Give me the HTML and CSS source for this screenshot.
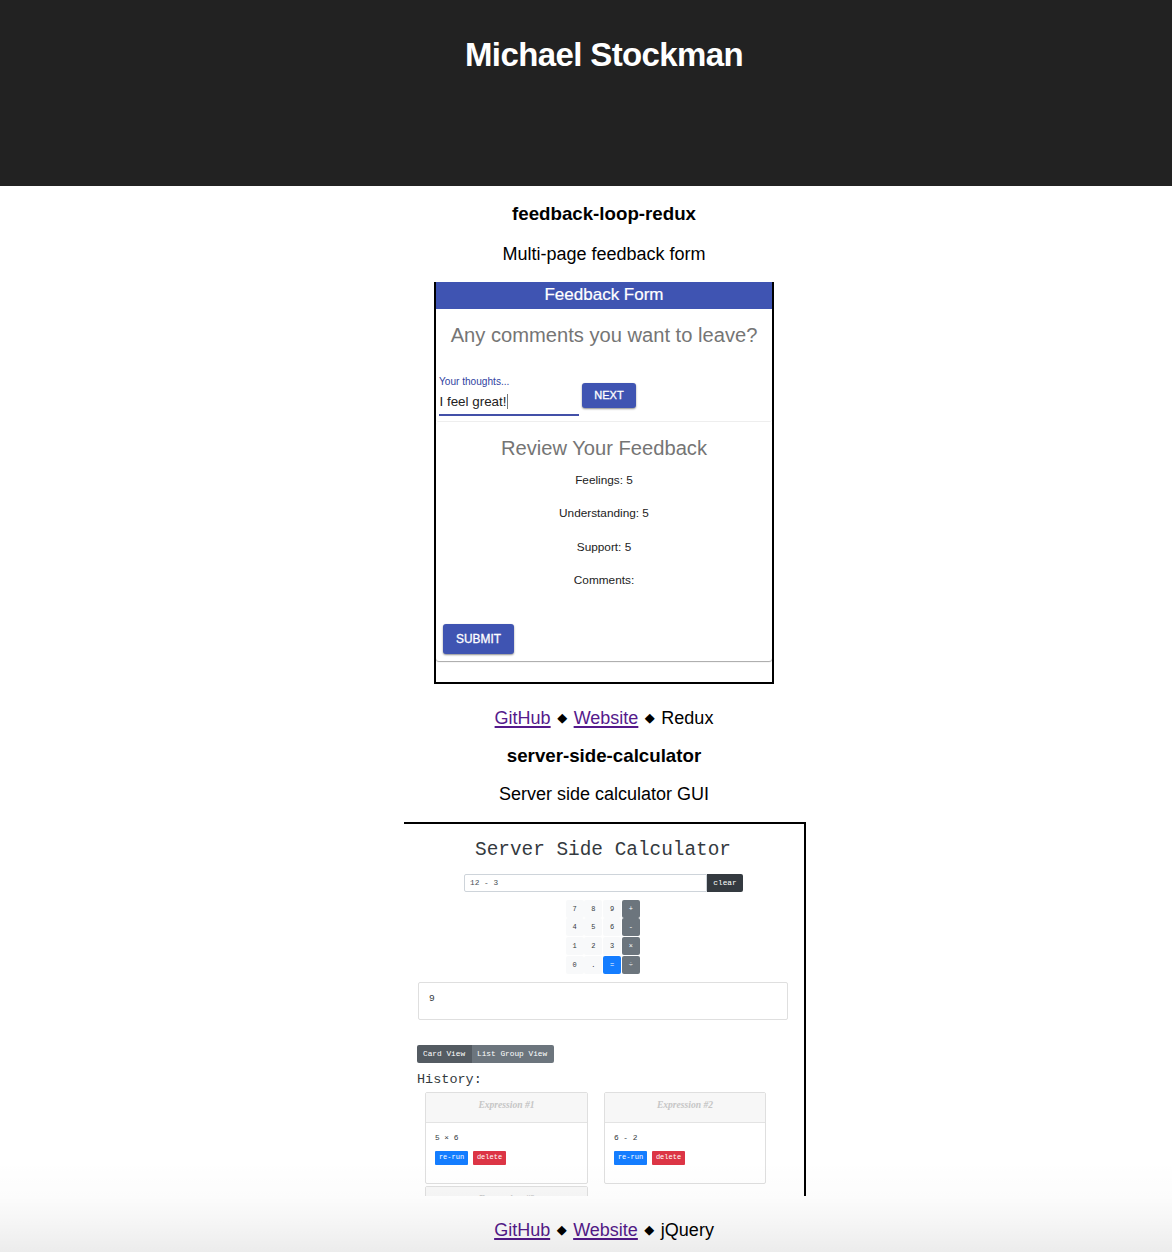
FILE: index.html
```html
<!DOCTYPE html>
<html lang="en">
<head>
<meta charset="utf-8">
<title>Michael Stockman</title>
<link rel="stylesheet" href="styles.css">
</head>
<body>
<header class="site-header"><h1>Michael Stockman</h1></header>
<main class="projects">
  <section class="project project-feedback">
    <h3>feedback-loop-redux</h3>
    <p class="summary">Multi-page feedback form</p>
    <div class="shot feedback">
      <div class="app-bar">Feedback Form</div>
      <div class="paper comments">
        <h2>Any comments you want to leave?</h2>
        <div class="field-row">
          <div class="field">
            <label>Your thoughts...</label>
            <div class="value">I feel great!<span class="caret"></span></div>
          </div>
          <button class="mui next">NEXT</button>
        </div>
      </div>
      <div class="paper review">
        <h2>Review Your Feedback</h2>
        <p>Feelings: 5</p>
        <p>Understanding: 5</p>
        <p>Support: 5</p>
        <p>Comments:</p>
        <button class="mui submit">SUBMIT</button>
      </div>
    </div>
    <p class="links"><a href="#">GitHub</a><span class="dot">◆</span><a href="#">Website</a><span class="dot">◆</span>Redux</p>
  </section>
  <section class="project project-calculator">
    <h3>server-side-calculator</h3>
    <p class="summary">Server side calculator GUI</p>
    <div class="shot calculator">
      <h2>Server Side Calculator</h2>
      <div class="entry"><div class="input">12 - 3</div><button class="clear">clear</button></div>
      <div class="keys">
        <span>7</span><span>8</span><span>9</span><span class="op">+</span>
        <span>4</span><span>5</span><span>6</span><span class="op">-</span>
        <span>1</span><span>2</span><span>3</span><span class="op">×</span>
        <span>0</span><span>.</span><span class="equals">=</span><span class="op">÷</span>
      </div>
      <div class="result">9</div>
      <div class="tabs"><span class="active">Card View</span><span>List Group View</span></div>
      <h4>History:</h4>
      <div class="cards">
        <div class="card">
          <div class="card-head">Expression #1</div>
          <div class="card-body"><p>5 × 6</p><div class="actions"><button class="run">re-run</button><button class="del">delete</button></div></div>
        </div>
        <div class="card">
          <div class="card-head">Expression #2</div>
          <div class="card-body"><p>6 - 2</p><div class="actions"><button class="run">re-run</button><button class="del">delete</button></div></div>
        </div>
        <div class="card"><div class="card-head">Expression #3</div></div>
      </div>
    </div>
    <p class="links"><a href="#">GitHub</a><span class="dot">◆</span><a href="#">Website</a><span class="dot">◆</span>jQuery</p>
  </section>
</main>
<div class="bottom-fade"></div>
</body>
</html>
```
FILE: styles.css
```css
* { box-sizing: border-box; }
html, body { margin: 0; height: 1252px; overflow: hidden; }
body {
  position: relative;
  background: #fff;
  color: #000;
  font-family: "Liberation Sans", Arial, sans-serif;
  font-size: 18px;
}
h1, h2, h3, h4, p { margin: 0; }
button { border: 0; margin: 0; padding: 0; font-family: inherit; }

.site-header {
  height: 186px;
  padding: 35px 0 0 36px;
  background: #222;
  color: #fff;
  text-align: center;
}
.site-header h1 { font-size: 33px; line-height: 40px; letter-spacing: -0.62px; }

.projects { padding-left: 36px; text-align: center; }
.project { display: flex; flex-direction: column; align-items: center; }
.project h3 { font-size: 18.72px; line-height: 22px; }
.summary, .links { line-height: 22px; }
.project-feedback h3 { margin-top: 17px; }
.project-feedback .summary { margin: 18px 0 17px; }
.project-feedback .links { margin-top: 23px; }
.project-calculator h3 { margin-top: 16px; }
.project-calculator .summary { margin: 16px 0 17px; }
.project-calculator .links { margin-top: 23px; }
.links { display: flex; }
.links a {
  color: #551a8b;
  text-decoration: underline;
  text-decoration-thickness: 2px;
  text-decoration-skip-ink: none;
  text-underline-offset: 2px;
}
.dot {
  width: 23px;
  font-family: "DejaVu Sans", sans-serif;
  font-size: 13px;
  line-height: 22px;
  text-align: center;
}

/* Feedback form preview */
.feedback {
  width: 340px;
  height: 402px;
  border: 2px solid #000;
  border-top: 0;
  background: #fff;
}
.app-bar {
  height: 27px;
  background: #3f54b2;
  color: #fff;
  font-size: 17px;
  line-height: 26px;
  -webkit-text-stroke: .2px #fff;
}
.paper { background: #fff; }
.paper h2 { color: #757575; font-size: 20.15px; font-weight: 400; line-height: 24px; }
.comments { height: 113px; padding-top: 14px; border-bottom: 1px solid #eee; border-radius: 0 0 3px 3px; }
.field-row { display: flex; margin: 28px 0 0 3px; }
.field { width: 140px; height: 41px; padding-top: 1px; border-bottom: 2px solid #4350a8; text-align: left; }
.field label { display: block; color: #303f9f; font-size: 10.1px; line-height: 12px; }
.value { display: flex; align-items: center; height: 16px; margin-top: 5px; padding-left: .5px; font-size: 13.4px; color: #222; }
.caret { width: 1px; height: 15px; background: #777; }
.mui {
  background: #3f54b2;
  color: #fff;
  border-radius: 3px;
  box-shadow: 0 1px 2px rgba(0, 0, 0, .45);
  -webkit-text-stroke: .3px #fff;
}
.next { width: 54px; height: 25px; margin: 8px 0 0 3px; font-size: 11px; line-height: 25px; }
.review {
  height: 239px;
  padding-top: 14px;
  border-radius: 3px;
  box-shadow: 0 1px 1px rgba(0, 0, 0, .35);
}
.review h2 { margin-bottom: 12.6px; }
.review p { height: 14px; margin-bottom: 19.6px; color: #222; font-size: 11.8px; line-height: 14px; }
.submit { display: block; width: 71px; height: 30px; margin: 36.4px 0 0 7px; font-size: 11.9px; line-height: 30px; }

/* Calculator preview */
.calculator {
  width: 402px;
  height: 374px;
  margin-left: 2px;
  padding: 15px 16px 0 14px;
  overflow: hidden;
  border: solid #000;
  border-width: 2px 2px 0 0;
  background: #fff;
  color: #343a40;
  font-family: "Liberation Mono", "Courier New", monospace;
  font-size: 7.8px;
  text-align: left;
}
.calculator h2 { font-size: 19.4px; font-weight: 400; line-height: 22px; text-align: center; }
.entry { display: flex; width: 279px; height: 18px; margin: 13px auto 0 46px; }
.input {
  flex: 1;
  padding-left: 5px;
  border: 1px solid #ced4da;
  border-radius: 2px 0 0 2px;
  color: #495057;
  line-height: 16px;
}
.clear { width: 36px; border-radius: 0 2px 2px 0; background: #343a40; color: #fff; font-size: 7.8px; }
.keys {
  display: grid;
  grid-template-columns: repeat(4, 18px);
  grid-auto-rows: 18px;
  gap: .8px;
  width: 75px;
  margin: 7.5px 0 0 147.5px;
  font-size: 7px;
  line-height: 18px;
  text-align: center;
}
.keys span { background: #f8f9fa; border-radius: 2px; }
.keys .op { background: #6c757d; color: #fff; }
.keys .equals { background: #147dff; color: #fff; }
.result {
  width: 370px;
  height: 38px;
  margin-top: 8.1px;
  padding: 8px 10px;
  border: 1px solid #dfdfdf;
  border-radius: 2px;
  font-size: 9.5px;
  line-height: 16px;
}
.tabs { display: flex; width: 137px; height: 18px; margin: 25px 0 0 -1px; line-height: 18px; color: #fff; }
.tabs span { flex: 1; padding-left: 5px; border-radius: 0 2px 2px 0; background: #6c757d; white-space: nowrap; }
.tabs .active { flex: 0 0 55px; padding-left: 6px; border-radius: 2px 0 0 2px; background: #545b62; }
.calculator h4 { margin: 9px 0 4px -1px; font-size: 13.5px; font-weight: 400; line-height: 16px; }
.cards { display: grid; grid-template-columns: 163px 162px; column-gap: 16px; row-gap: 2px; padding-left: 7px; }
.card { height: 92px; border: 1px solid #dfdfdf; border-radius: 2px; }
.card-head {
  height: 30px;
  border-bottom: 1px solid #e3e3e3;
  background: #f7f7f7;
  color: #c6c6c6;
  font: italic bold 9.6px/23px "Liberation Serif", "Times New Roman", serif;
  text-align: center;
}
.card-body { padding: 10px 9px; }
.card-body p { line-height: 10px; }
.actions { display: flex; gap: 5px; margin-top: 8px; }
.actions button { width: 33px; height: 14px; border-radius: 1px; color: #fff; font-size: 7px; line-height: 13px; }
.run { background: #147dff; }
.del { background: #dc3545; }

/* Shade lying over the foot of the page */
.bottom-fade {
  position: absolute;
  right: 0;
  bottom: 0;
  left: 0;
  height: 92px;
  background: linear-gradient(rgba(0, 0, 0, 0), rgba(0, 0, 0, .012) 40%, rgba(0, 0, 0, .035) 65%, rgba(0, 0, 0, .075));
  pointer-events: none;
}
```
